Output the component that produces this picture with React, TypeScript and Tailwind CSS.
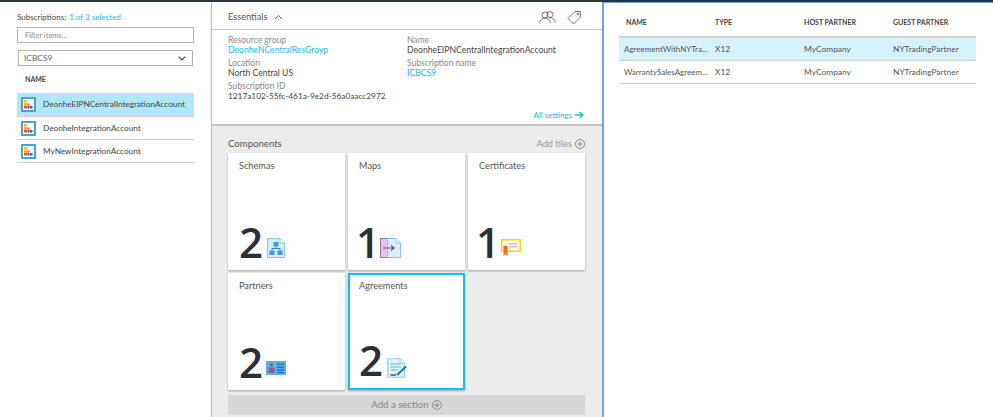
const font = { fontFamily: 'Lato, "Open Sans", sans-serif' };
const digitFont = { fontFamily: '"Open Sans", sans-serif' };

function BladeIcon() {
  return (
    <svg width="15" height="15" viewBox="0 0 15 15" className="shrink-0">
      <rect x="1" y="1" width="13" height="13" fill="#fff" stroke="#4aa3d6" strokeWidth="2" />
      <rect x="3" y="3" width="3" height="2.5" fill="#fcb714" />
      <rect x="3" y="6" width="3" height="2" fill="#fcb714" />
      <rect x="3" y="8.5" width="3" height="3" fill="#e8590c" />
      <rect x="6.5" y="6.5" width="2" height="2" fill="#e8590c" />
      <rect x="6.5" y="9" width="2" height="2.5" fill="#7a3f9d" />
      <rect x="9" y="9" width="2" height="2.5" fill="#7a3f9d" />
      <rect x="11.2" y="9" width="1" height="2.5" fill="#59b4d9" />
    </svg>
  );
}

function SchemaIcon() {
  return (
    <svg width="18" height="20" viewBox="0 0 18 20">
      <path d="M.5.5H13L17.5 5V19.5H.5Z" fill="#d5edf8" stroke="#7fc8e8" />
      <path d="M13 .5V5H17.5" fill="#fff" stroke="#7fc8e8" />
      <rect x="6.5" y="4" width="5" height="4.5" fill="#3f9bd5" />
      <rect x="2.5" y="12.5" width="5" height="4.5" fill="#3f9bd5" />
      <rect x="10.5" y="12.5" width="5" height="4.5" fill="#3f9bd5" />
      <path d="M9 8.5V10.5H5V12.5M9 10.5H13V12.5" fill="none" stroke="#2b7fc0" />
    </svg>
  );
}

function MapIcon() {
  return (
    <svg width="21" height="20" viewBox="0 0 21 20">
      <rect x=".5" y=".5" width="7" height="19" fill="#dcc8e4" stroke="#a06db4" />
      <path d="M7.5.5H16L20.5 5V19.5H7.5Z" fill="#d9eef8" stroke="#7fc8e8" />
      <path d="M16 .5V5H20.5" fill="#fff" stroke="#7fc8e8" />
      <path d="M3 10H14M11 7.5 14 10 11 12.5" fill="none" stroke="#7d3f98" strokeWidth="1.2" />
    </svg>
  );
}

function CertIcon() {
  return (
    <svg width="20" height="17" viewBox="0 0 20 17">
      <rect x=".75" y=".75" width="18.5" height="11.5" fill="#fff8dc" stroke="#fcd116" strokeWidth="1.5" />
      <rect x="7.5" y="4" width="9" height="1.5" fill="#c8c8c8" />
      <rect x="7.5" y="7" width="9" height="1.5" fill="#c8c8c8" />
      <path d="M2.5 8H6.5V17L4.5 15.5 2.5 17Z" fill="#ee7a1c" />
      <circle cx="4.5" cy="8.5" r="2" fill="#f26a1b" />
    </svg>
  );
}

function PartnerIcon() {
  return (
    <svg width="20" height="14" viewBox="0 0 20 14">
      <rect width="20" height="14" fill="#59b4d9" />
      <circle cx="5.5" cy="3.8" r="1.8" fill="#a0519f" />
      <rect x="2.5" y="6.5" width="6" height="5.5" fill="#a0519f" />
      <rect x="11" y="2.5" width="7" height="1.3" fill="#0f6fc6" />
      <rect x="11" y="5.5" width="7" height="1.3" fill="#0f6fc6" />
      <rect x="11" y="8.5" width="7" height="1.3" fill="#0f6fc6" />
      <rect x="11" y="11" width="7" height="1.3" fill="#0f6fc6" />
    </svg>
  );
}

function AgreementIcon() {
  return (
    <svg width="20" height="20" viewBox="0 0 20 20">
      <path d="M.75.75H13L17.5 5V19.25H.75Z" fill="#e3f3fb" stroke="#8fd0ec" strokeWidth="1.2" />
      <path d="M13 .75V5H17.5" fill="#fff" stroke="#8fd0ec" />
      <path d="M3.5 6H14M3.5 9H14M3.5 12H11" stroke="#59b4d9" fill="none" />
      <path d="M3.5 17H9" stroke="#222" strokeWidth="1.2" />
      <path d="M10 17 19 8.5" stroke="#0f78d4" strokeWidth="2" />
    </svg>
  );
}

function PlusCircle({ size = 10 }: { size?: number }) {
  return (
    <svg width={size} height={size} viewBox="0 0 10 10" className="shrink-0">
      <circle cx="5" cy="5" r="4.5" fill="none" stroke="#777" strokeWidth=".8" />
      <path d="M5 2.5V7.5M2.5 5H7.5" stroke="#777" strokeWidth=".8" />
    </svg>
  );
}

function Field({ label, value, link, small }: { label: string; value: string; link?: boolean; small?: boolean }) {
  return (
    <div className="flex h-[23px] flex-col">
      <div className="text-[8.5px] leading-[10px] text-[#8a8a8a]">{label}</div>
      <div className={`leading-[11px] whitespace-nowrap ${small ? "text-[8.3px]" : "text-[8.6px]"} ${link ? "text-[#1cb8ee]" : "text-[#444]"}`}>{value}</div>
    </div>
  );
}

function Tile({ title, count, icon, selected, iconClass, digitClass }: { title: string; count: string; icon: React.ReactNode; selected?: boolean; iconClass: string; digitClass?: string }) {
  return (
    <div className={`flex h-[117px] flex-col justify-between bg-white pb-[4px] shadow-[0_1px_2px_rgba(0,0,0,0.3)] ${selected ? "border-2 border-[#14bdf0] pl-[9px] pt-[4px]" : "pl-[11px] pt-[6px]"}`}>
      <div className="text-[9.2px] leading-[14px] text-[#555]">{title}</div>
      <div className="flex items-end">
        <span className={`text-[42px] leading-[48px] font-semibold text-[#2b3036] ${digitClass ?? ""}`} style={digitFont}>{count}</span>
        <span className={`flex ${iconClass}`}>{icon}</span>
      </div>
    </div>
  );
}

function Row({ name, selected }: { name: string; selected?: boolean }) {
  return (
    <div className={`flex items-center gap-[7px] border-b border-[#ccc] pl-[4px] ${selected ? "h-[24px] bg-[#aee8fa]" : "h-[23px]"}`}>
      <BladeIcon />
      <span className="text-[8.2px] whitespace-nowrap text-[#444]">{name}</span>
    </div>
  );
}

const columns = "grid grid-cols-[96px_89px_89px_82px]";

function AgreementRow({ name, selected }: { name: string; selected?: boolean }) {
  return (
    <div className={`${columns} h-[23px] items-center border-b border-[#ccc] text-[8.4px] text-[#555] ${selected ? "bg-[#d6f3fd]" : ""}`}>
      <span className="pl-[5px] text-[8px] whitespace-nowrap">{name}</span>
      <span>X12</span>
      <span>MyCompany</span>
      <span className="whitespace-nowrap">NYTradingPartner</span>
    </div>
  );
}

export default function App() {
  return (
    <div className="flex h-[417px] w-[993px] flex-col overflow-hidden bg-white" style={font}>
      <div className="h-[2px] shrink-0 bg-[#2a3540]" />
      <div className="flex min-h-0 flex-1">
        {/* Left blade */}
        <div className="flex w-[212px] shrink-0 flex-col border-r border-[#bdbdbd] pt-[9px] pl-[17px] pr-[18px]">
          <div className="flex h-[11px] items-center gap-[3px] text-[8px] whitespace-nowrap">
            <span className="text-[#444]">Subscriptions:</span>
            <span className="text-[#1cb8ee]">1 of 3 selected</span>
          </div>
          <div className="mt-[5px] flex h-[16px] w-[177px] items-center border border-[#b5b5b5] pl-[7px] text-[8px] text-[#8a8a8a] italic">Filter items...</div>
          <div className="mt-[7px] ml-[1px] flex h-[16px] w-[175px] items-center justify-between border border-[#b5b5b5] pl-[5px] pr-[6px] text-[8.4px] text-[#666]">
            <span>ICBCS9</span>
            <svg width="8" height="5" viewBox="0 0 8 5"><path d="M.7.7 4 4 7.3.7" fill="none" stroke="#333" strokeWidth="1.1" /></svg>
          </div>
          <div className="mt-[8px] pl-[8px] text-[7px] leading-[10px] font-bold text-[#444]">NAME</div>
          <div className="mt-[9px] w-[177px]">
            <Row name="DeonheEIPNCentralIntegrationAccount" selected />
            <Row name="DeonheIntegrationAccount" />
            <Row name="MyNewIntegrationAccount" />
          </div>
        </div>

        {/* Middle blade */}
        <div className="flex w-[390px] shrink-0 flex-col">
          <div className="flex h-[28px] shrink-0 items-center justify-between border-b border-[#c8c8c8] pl-[16px] pr-[20px] pt-[3px]">
            <div className="flex items-center gap-[7px] text-[9.2px] text-[#555]">
              <span>Essentials</span>
              <svg width="9" height="6" viewBox="0 0 9 6"><path d="M1 5 4.5 1.5 8 5" fill="none" stroke="#555" strokeWidth=".9" /></svg>
            </div>
            <div className="flex items-center gap-[11px]">
              <svg width="17" height="13" viewBox="0 0 17 13" fill="none" stroke="#555" strokeWidth=".8">
                <circle cx="6" cy="4" r="3" />
                <circle cx="11" cy="3.5" r="3" />
                <path d="M.5 12C1 8.5 3.5 7 6 7S11 8.5 11.5 12M10 6.8C13 6.3 15.8 8 16.5 11.5" />
              </svg>
              <svg width="15" height="15" viewBox="0 0 15 15" fill="none" stroke="#555" strokeWidth=".8">
                <path d="M8 1.5H13.5V7L6.5 14 1 8.5Z" />
                <circle cx="11" cy="4" r="1" />
              </svg>
            </div>
          </div>
          <div className="flex h-[96px] shrink-0 flex-col border-b-2 border-[#c4c4c4] pl-[16px] pr-[18px] pt-[5px]">
            <div className="grid grid-cols-[179px_1fr]">
              <div className="flex flex-col">
                <Field label="Resource group" value="DeonheNCentralResGroyp" link />
                <Field label="Location" value="North Central US" />
                <Field label="Subscription ID" value="1217a102-55fc-461a-9e2d-56a0aacc2972" small />
              </div>
              <div className="flex flex-col">
                <Field label="Name" value="DeonheEIPNCentralIntegrationAccount" />
                <Field label="Subscription name" value="ICBCS9" link />
              </div>
            </div>
            <div className="mt-auto mb-[3px] flex items-center justify-end gap-[3px] text-[8px] text-[#1cb8ee]">
              <span>All settings</span>
              <svg width="9" height="8" viewBox="0 0 9 8"><path d="M0 4H7.5M4.5 1 7.8 4 4.5 7" fill="none" stroke="#1cb8ee" strokeWidth="1.4" /></svg>
            </div>
          </div>
          <div className="flex min-h-0 flex-1 flex-col bg-[#ececec] pl-[16px] pr-[17px] pt-[11px]">
            <div className="flex h-[14px] items-center justify-between text-[9.6px]">
              <span className="text-[#555]">Components</span>
              <span className="flex items-center gap-[3px] text-[9.2px] text-[#999]">Add tiles <PlusCircle /></span>
            </div>
            <div className="mt-[2px] grid grid-cols-3 gap-x-[3px] gap-y-[3px]">
              <Tile title="Schemas" count="2" icon={<SchemaIcon />} iconClass="ml-[4px] mb-[8px]" />
              <Tile title="Maps" count="1" icon={<MapIcon />} digitClass="-ml-[3px]" iconClass="ml-[0px] mb-[8px]" />
              <Tile title="Certificates" count="1" icon={<CertIcon />} digitClass="-ml-[3px]" iconClass="ml-[1px] mb-[10px]" />
              <Tile title="Partners" count="2" icon={<PartnerIcon />} iconClass="ml-[3px] mb-[11px]" />
              <Tile title="Agreements" count="2" icon={<AgreementIcon />} iconClass="ml-[4px] mb-[6px]" selected />
            </div>
            <div className="mt-[5px] flex h-[20px] items-center justify-center gap-[3px] bg-[#d6d6d6] text-[9.6px] text-[#888]">
              Add a section <PlusCircle />
            </div>
          </div>
        </div>

        {/* Right blade */}
        <div className="flex min-w-0 flex-1 flex-col border-l-2 border-t border-[#6fa6e0] pl-[15px] pr-[17px]">
          <div className={`${columns} h-[35px] items-center border-b-2 border-[#d0d0d0] pt-[6px] text-[7px] font-bold text-[#444]`}>
            <span className="pl-[7px]">NAME</span>
            <span>TYPE</span>
            <span>HOST PARTNER</span>
            <span>GUEST PARTNER</span>
          </div>
          <AgreementRow name="AgreementWithNYTra..." selected />
          <AgreementRow name="WarrantySalesAgreem..." />
        </div>
      </div>
    </div>
  );
}
